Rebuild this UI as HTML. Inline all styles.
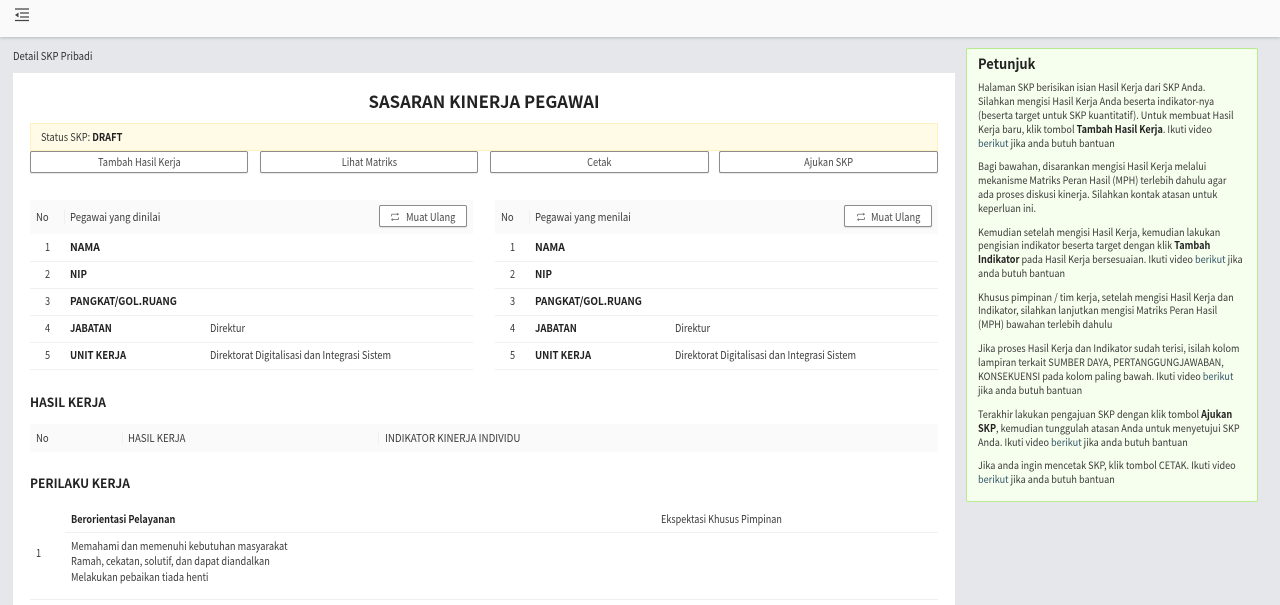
<!DOCTYPE html>
<html lang="id"><head><meta charset="utf-8"><title>Detail SKP Pribadi</title>
<style>
html,body{margin:0;padding:0;width:1280px;height:605px;overflow:hidden;background:#e5e7eb}
body{position:relative;font-family:"Noto Sans CJK SC","Liberation Sans",sans-serif;font-size:10.8px;color:#3a3a3a}
.a{position:absolute}
.t{position:absolute;white-space:nowrap;line-height:14px;height:14px;transform-origin:0 50%;transform:scaleX(.855)}
.u{transform:scaleX(.905)}
.h{transform:scaleX(.883)}
b{font-weight:700;color:#222}
.btn{position:absolute;box-sizing:border-box;background:#fff;border:1px solid #8c8c8c;border-radius:2px;text-align:center;color:#4a4a4a;white-space:nowrap;box-shadow:0 1px 1px rgba(0,0,0,.1)}
.btn span{display:inline-block;transform:scaleX(.855)}
.top{left:0;top:0;width:1280px;height:37px;background:#fafafa;box-shadow:0 1px 3px rgba(0,0,0,.2)}
.card{left:13px;top:73px;width:942px;height:532px;background:#fff}
.hd{background:#fafafa}
.sep{width:1px;background:#f0f0f0}
.ln{height:1px;background:#f0f0f0}
.side{left:966px;top:48px;width:292px;height:454px;box-sizing:border-box;background:#f6ffed;border:1px solid #b7eb8f;border-radius:2px}
.s{left:978px;color:#3a3a3a;font-size:10.3px;transform:scaleX(.885)}
.l{color:#35566a}
.sec{font-weight:700;font-size:12.5px;color:#222;transform:scaleX(.96)}
.k{font-weight:700;color:#222;transform:scaleX(.9)}
</style></head><body>
<div class="a top"></div>
<svg class="a" style="left:15px;top:8px" width="15" height="14" viewBox="0 0 15 14"><path d="M0 1h14M5 5h9M5 9h9M0 12.5h14" stroke="#444" stroke-width="1.2" fill="none"/><path d="M3.5 4.5v5L0 7z" fill="#444"/></svg>
<div class="t" style="left:13px;top:49px;color:#333;transform:scaleX(.878)">Detail SKP Pribadi</div>
<div class="a card"></div>

<div class="t" style="left:30px;width:908px;top:91px;height:20px;line-height:20px;text-align:center;font-size:17px;font-weight:700;color:#222;transform-origin:50% 50%;transform:scaleX(.983)">SASARAN KINERJA PEGAWAI</div>
<div class="a" style="left:30px;top:123px;width:908px;height:28px;box-sizing:border-box;background:#fffbe6;border:1px solid #fff0c0"></div>
<div class="t" style="left:41px;top:130px;transform:scaleX(.86)">Status SKP: <b>DRAFT</b></div>
<div class="btn" style="left:30px;top:151px;width:218px;height:22px;line-height:21px"><span>Tambah Hasil Kerja</span></div>
<div class="btn" style="left:260px;top:151px;width:218px;height:22px;line-height:21px"><span>Lihat Matriks</span></div>
<div class="btn" style="left:490px;top:151px;width:219px;height:22px;line-height:21px"><span>Cetak</span></div>
<div class="btn" style="left:719px;top:151px;width:219px;height:22px;line-height:21px"><span>Ajukan SKP</span></div>

<!-- left table -->
<div class="a hd" style="left:30px;top:200px;width:443px;height:34px"></div>
<div class="a sep" style="left:64px;top:210px;height:14px"></div>
<div class="t h" style="left:36px;top:210px">No</div>
<div class="t h" style="left:70px;top:210px">Pegawai yang dinilai</div>
<div class="btn" style="left:379px;top:205px;width:88px;height:22px"></div>
<div class="t" style="left:406px;top:210px;color:#4a4a4a;transform:scaleX(.862)">Muat Ulang</div>
<svg class="a" style="left:391px;top:213px" width="8" height="8" viewBox="0 0 8 8"><path d="M.5 3.4V2.2Q.5 1.2 1.5 1.2H7.4M6.2.2 7.4 1.2 6.2 2.2M7.5 4.4v1.2Q7.5 6.6 6.5 6.6H.6M1.8 5.6.6 6.6l1.2 1" stroke="#777" stroke-width=".9" fill="none"/></svg>
<div class="t" style="left:44.5px;top:240px">1</div><div class="t k" style="left:70px;top:240px;transform:scaleX(.96)">NAMA</div><div class="a ln" style="left:30px;top:261px;width:443px"></div>
<div class="t" style="left:44.5px;top:267px">2</div><div class="t k" style="left:70px;top:267px">NIP</div><div class="a ln" style="left:30px;top:288px;width:443px"></div>
<div class="t" style="left:44.5px;top:294px">3</div><div class="t k" style="left:70px;top:294px;transform:scaleX(.918)">PANGKAT/GOL.RUANG</div><div class="a ln" style="left:30px;top:315px;width:443px"></div>
<div class="t" style="left:44.5px;top:321px">4</div><div class="t k" style="left:70px;top:321px;transform:scaleX(.875)">JABATAN</div><div class="t" style="left:210px;top:321px">Direktur</div><div class="a ln" style="left:30px;top:342px;width:443px"></div>
<div class="t" style="left:44.5px;top:348px">5</div><div class="t k" style="left:70px;top:348px;transform:scaleX(.888)">UNIT KERJA</div><div class="t" style="left:210px;top:348px">Direktorat Digitalisasi dan Integrasi Sistem</div><div class="a ln" style="left:30px;top:369px;width:443px"></div>

<!-- right table -->
<div class="a hd" style="left:495px;top:200px;width:443px;height:34px"></div>
<div class="a sep" style="left:529px;top:210px;height:14px"></div>
<div class="t h" style="left:501px;top:210px">No</div>
<div class="t h" style="left:535px;top:210px">Pegawai yang menilai</div>
<div class="btn" style="left:844px;top:205px;width:88px;height:22px"></div>
<div class="t" style="left:871px;top:210px;color:#4a4a4a;transform:scaleX(.862)">Muat Ulang</div>
<svg class="a" style="left:857px;top:213px" width="8" height="8" viewBox="0 0 8 8"><path d="M.5 3.4V2.2Q.5 1.2 1.5 1.2H7.4M6.2.2 7.4 1.2 6.2 2.2M7.5 4.4v1.2Q7.5 6.6 6.5 6.6H.6M1.8 5.6.6 6.6l1.2 1" stroke="#777" stroke-width=".9" fill="none"/></svg>
<div class="t" style="left:509.5px;top:240px">1</div><div class="t k" style="left:535px;top:240px;transform:scaleX(.96)">NAMA</div><div class="a ln" style="left:495px;top:261px;width:443px"></div>
<div class="t" style="left:509.5px;top:267px">2</div><div class="t k" style="left:535px;top:267px">NIP</div><div class="a ln" style="left:495px;top:288px;width:443px"></div>
<div class="t" style="left:509.5px;top:294px">3</div><div class="t k" style="left:535px;top:294px;transform:scaleX(.918)">PANGKAT/GOL.RUANG</div><div class="a ln" style="left:495px;top:315px;width:443px"></div>
<div class="t" style="left:509.5px;top:321px">4</div><div class="t k" style="left:535px;top:321px;transform:scaleX(.875)">JABATAN</div><div class="t" style="left:675px;top:321px">Direktur</div><div class="a ln" style="left:495px;top:342px;width:443px"></div>
<div class="t" style="left:509.5px;top:348px">5</div><div class="t k" style="left:535px;top:348px;transform:scaleX(.888)">UNIT KERJA</div><div class="t" style="left:675px;top:348px">Direktorat Digitalisasi dan Integrasi Sistem</div><div class="a ln" style="left:495px;top:369px;width:443px"></div>

<!-- hasil kerja -->
<div class="t sec" style="left:30px;top:395px">HASIL KERJA</div>
<div class="a hd" style="left:30px;top:424px;width:908px;height:28px"></div>
<div class="a sep" style="left:122px;top:431px;height:14px"></div>
<div class="a sep" style="left:378px;top:431px;height:14px"></div>
<div class="t h" style="left:36px;top:431px">No</div>
<div class="t" style="left:128px;top:431px;transform:scaleX(.89)">HASIL KERJA</div>
<div class="t u" style="left:385px;top:431px">INDIKATOR KINERJA INDIVIDU</div>

<!-- perilaku kerja -->
<div class="t sec" style="left:30px;top:476px">PERILAKU KERJA</div>
<div class="t k" style="left:71px;top:512px;transform:scaleX(.845)">Berorientasi Pelayanan</div>
<div class="t" style="left:661px;top:512px;transform:scaleX(.84)">Ekspektasi Khusus Pimpinan</div>
<div class="a ln" style="left:65px;top:532px;width:873px"></div>
<div class="t" style="left:36px;top:546px">1</div>
<div class="t" style="left:71px;top:539px">Memahami dan memenuhi kebutuhan masyarakat</div>
<div class="t" style="left:71px;top:554px">Ramah, cekatan, solutif, dan dapat diandalkan</div>
<div class="t" style="left:71px;top:570px">Melakukan pebaikan tiada henti</div>
<div class="a ln" style="left:30px;top:599px;width:908px"></div>

<!-- petunjuk -->
<div class="a side"></div>
<div class="t s" style="top:57px;font-size:14px;font-weight:700;color:#222;transform:scaleX(.92)">Petunjuk</div>
<div class="t s" style="top:80px;transform:scaleX(.865)">Halaman SKP berisikan isian Hasil Kerja dari SKP Anda.</div>
<div class="t s" style="top:94px">Silahkan mengisi Hasil Kerja Anda beserta indikator-nya</div>
<div class="t s" style="top:108px">(beserta target untuk SKP kuantitatif). Untuk membuat Hasil</div>
<div class="t s" style="top:122px">Kerja baru, klik tombol <b>Tambah Hasil Kerja</b>. Ikuti video</div>
<div class="t s" style="top:136px"><span class="l">berikut</span> jika anda butuh bantuan</div>
<div class="t s" style="top:159px">Bagi bawahan, disarankan mengisi Hasil Kerja melalui</div>
<div class="t s" style="top:173px">mekanisme Matriks Peran Hasil (MPH) terlebih dahulu agar</div>
<div class="t s" style="top:187px">ada proses diskusi kinerja. Silahkan kontak atasan untuk</div>
<div class="t s" style="top:201px">keperluan ini.</div>
<div class="t s" style="top:225px">Kemudian setelah mengisi Hasil Kerja, kemudian lakukan</div>
<div class="t s" style="top:238px">pengisian indikator beserta target dengan klik <b>Tambah</b></div>
<div class="t s" style="top:252px"><b>Indikator</b> pada Hasil Kerja bersesuaian. Ikuti video <span class="l">berikut</span> jika</div>
<div class="t s" style="top:266px">anda butuh bantuan</div>
<div class="t s" style="top:290px">Khusus pimpinan / tim kerja, setelah mengisi Hasil Kerja dan</div>
<div class="t s" style="top:303px">Indikator, silahkan lanjutkan mengisi Matriks Peran Hasil</div>
<div class="t s" style="top:317px">(MPH) bawahan terlebih dahulu</div>
<div class="t s" style="top:341px">Jika proses Hasil Kerja dan Indikator sudah terisi, isilah kolom</div>
<div class="t s" style="top:355px">lampiran terkait SUMBER DAYA, PERTANGGUNGJAWABAN,</div>
<div class="t s" style="top:369px">KONSEKUENSI pada kolom paling bawah. Ikuti video <span class="l">berikut</span></div>
<div class="t s" style="top:383px">jika anda butuh bantuan</div>
<div class="t s" style="top:407px">Terakhir lakukan pengajuan SKP dengan klik tombol <b>Ajukan</b></div>
<div class="t s" style="top:421px"><b>SKP</b>, kemudian tunggulah atasan Anda untuk menyetujui SKP</div>
<div class="t s" style="top:435px">Anda. Ikuti video <span class="l">berikut</span> jika anda butuh bantuan</div>
<div class="t s" style="top:458px">Jika anda ingin mencetak SKP, klik tombol CETAK. Ikuti video</div>
<div class="t s" style="top:472px"><span class="l">berikut</span> jika anda butuh bantuan</div>
</body></html>
